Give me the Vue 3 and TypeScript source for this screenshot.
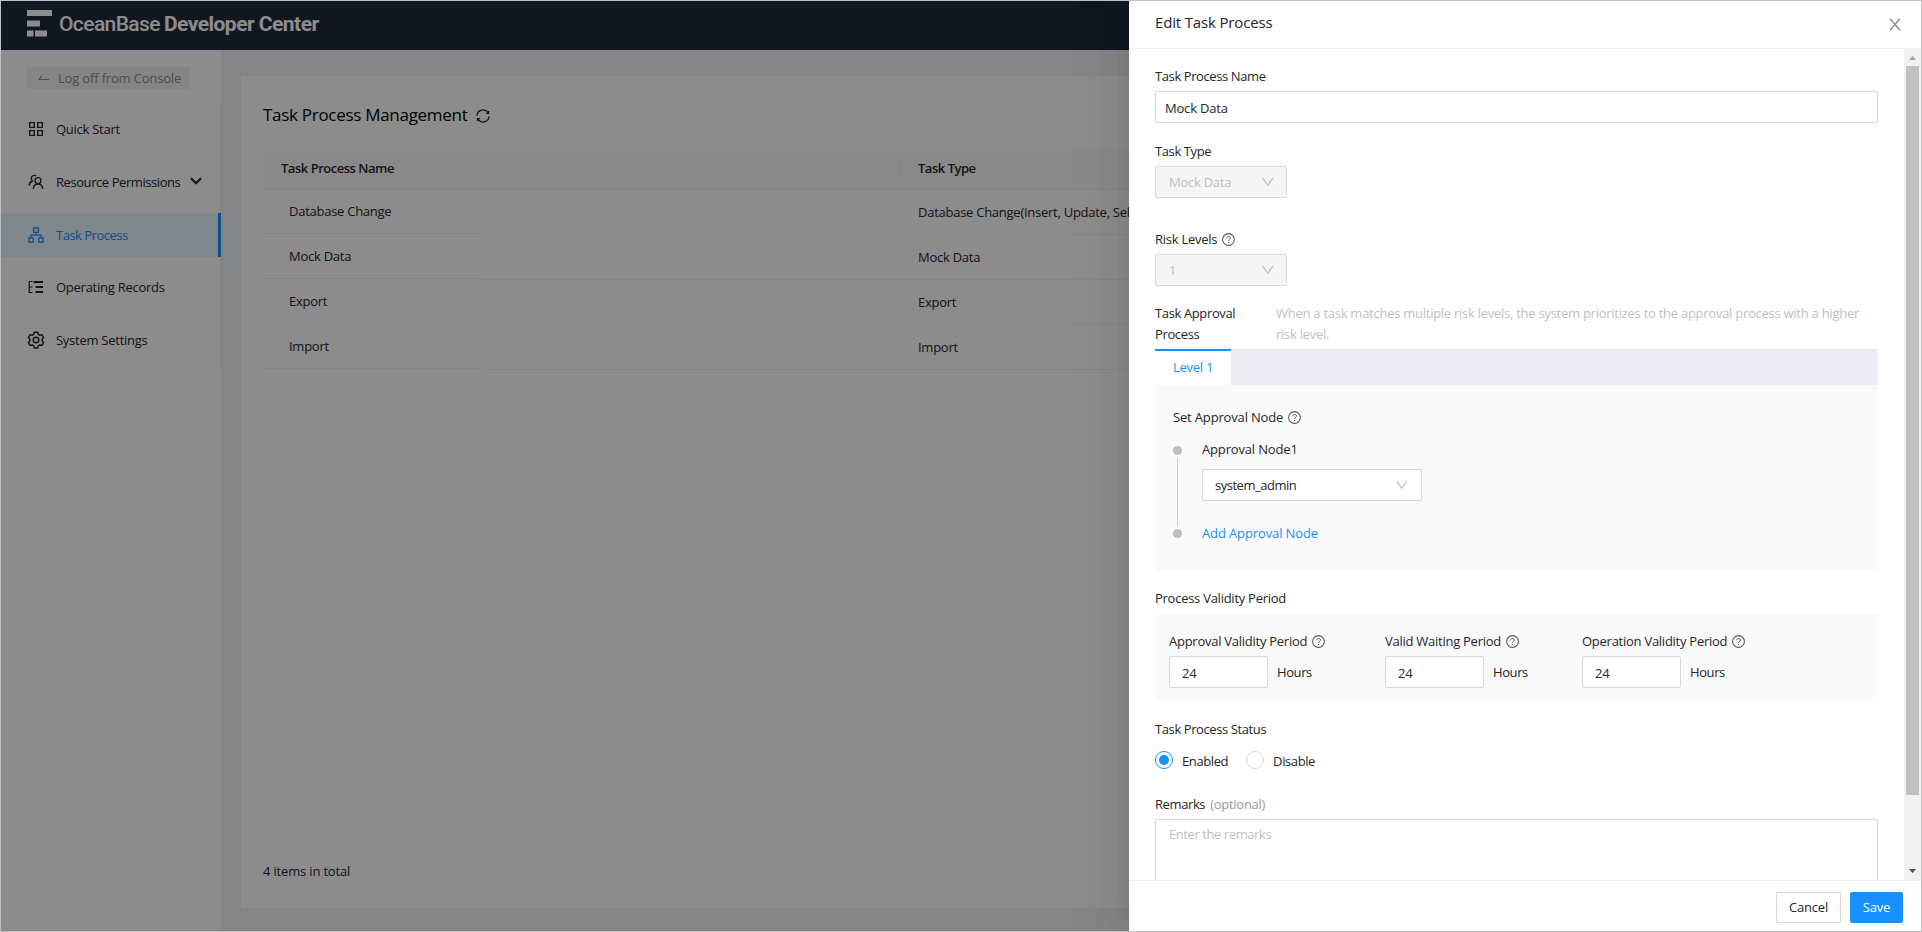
<script setup lang="ts">
import { ref } from 'vue'

interface MenuItem { key: string; label: string; arrow?: boolean }
interface ProcessRow { name: string; type: string }
interface Period { key: string; label: string; hours: string }

const menu: MenuItem[] = [
  { key: 'start', label: 'Quick Start' },
  { key: 'perm', label: 'Resource Permissions', arrow: true },
  { key: 'process', label: 'Task Process' },
  { key: 'records', label: 'Operating Records' },
  { key: 'settings', label: 'System Settings' },
]
const activeKey = ref('process')

const rows: ProcessRow[] = [
  { name: 'Database Change', type: 'Database Change(Insert, Update, Select, Delete)' },
  { name: 'Mock Data', type: 'Mock Data' },
  { name: 'Export', type: 'Export' },
  { name: 'Import', type: 'Import' },
]

const processName = ref('Mock Data')
const status = ref<'enabled' | 'disabled'>('enabled')
const remarks = ref('')
const periods = ref<Period[]>([
  { key: 'approval', label: 'Approval Validity Period', hours: '24' },
  { key: 'waiting', label: 'Valid Waiting Period', hours: '24' },
  { key: 'operation', label: 'Operation Validity Period', hours: '24' },
])
</script>

<template>
  <div class="screen">
    <div class="app">
      <header class="topbar">
        <svg class="logo" width="26" height="28" viewBox="0 0 26 28" fill="#fff">
          <path d="M0 0h25v6H0zM0 10.5h13v6H0zM0 20.5h6.5v6H0zM8 20.5h12v6H8z" />
        </svg>
        <span class="brand">OceanBase</span>
        <span class="brand strong">Developer Center</span>
      </header>
      <div class="workspace">
        <nav class="sidebar">
          <div class="logoff">
            <svg width="11" height="6" viewBox="0 0 11 6" fill="none" stroke="currentColor"><path d="M4 .5 1 4.5h10" /></svg>
            <span>Log off from Console</span>
          </div>
          <div class="menu">
            <div v-for="m in menu" :key="m.key" class="item" :class="[m.key, { active: m.key === activeKey }]">
              <svg v-if="m.key === 'start'" class="ico" viewBox="0 0 16 16" fill="none" stroke="currentColor" stroke-width="1.3">
                <path d="M1.650 1.650h4.700v4.700h-4.700zM9.650 1.650h4.700v4.700h-4.700zM1.650 9.650h4.700v4.700h-4.700zM9.650 9.650h4.700v4.700h-4.700z" />
              </svg>
              <svg v-else-if="m.key === 'perm'" class="ico" viewBox="0 0 16 16" fill="none" stroke="currentColor" stroke-width="1.4">
                <circle cx="10" cy="6.6" r="3" />
                <path d="M5.2 15c.3-3 2.2-5 4.8-5s4.500 2 4.800 5M8 1.900C6.500.8 3.500 1.500 3.300 4.300c0 1.200.4 2 1.100 2.700C2.600 7.700 1.300 9.300 1.100 11.600" />
              </svg>
              <svg v-else-if="m.key === 'process'" class="ico" viewBox="0 0 16 16" fill="none" stroke="currentColor" stroke-width="1.3">
                <path d="M5.650.95h4.700v4.400h-4.700zM.95 10.850h4.200v4.200H.95zM10.850 10.850h4.200v4.200h-4.200zM8 5.350v2.800M3 10.850v-2.700h10v2.700" />
              </svg>
              <svg v-else-if="m.key === 'records'" class="ico" viewBox="0 0 16 16" fill="none" stroke="currentColor" stroke-width="1.4">
                <path d="M4.500 2.500H1.200v11h3.300M1.200 8h3.300" stroke-width="1.2" />
                <path d="M5.500 3H15M7.500 8H15M7.500 13H15" stroke-width="2" />
              </svg>
              <svg v-else class="ico gear" viewBox="0 0 18 18" fill="none" stroke="currentColor" stroke-width="1.5" stroke-linejoin="round">
                <path d="M7.300 1.200h3.400l.6 2.100 1.500.9 2.100-.5 1.700 2.900-1.500 1.600v1.700l1.500 1.600-1.700 2.900-2.100-.5-1.500.9-.6 2.100H7.300l-.6-2.100-1.500-.9-2.100.5-1.700-2.900 1.500-1.600V8.200L1.400 6.600l1.700-2.900 2.100.5 1.500-.9z" />
                <circle cx="9" cy="9" r="2.800" />
              </svg>
              <span class="item-label">{{ m.label }}</span>
              <svg v-if="m.arrow" class="caret" width="12" height="8" viewBox="0 0 12 8" fill="none" stroke="currentColor" stroke-width="2.200"><path d="m1 1.300 5 5 5-5" /></svg>
            </div>
          </div>
        </nav>
        <main class="card">
          <div class="card-title">
            <h1>Task Process Management</h1>
            <svg width="14" height="14" viewBox="0 0 14 14" fill="none" stroke="#222" stroke-width="1.200">
              <path d="M1 6.600A6 6 0 0 1 12 3.700M13 7.400A6 6 0 0 1 2 10.300M12.500 1.900v2.400h-2.300M1.500 12.100V9.700h2.300" />
            </svg>
          </div>
          <div class="table">
            <div class="thead">
              <div class="th name">Task Process Name</div>
              <div class="th">Task Type</div>
            </div>
            <div v-for="r in rows" :key="r.name" class="tr">
              <div class="td name">{{ r.name }}</div>
              <div class="td type">{{ r.type }}</div>
            </div>
          </div>
          <div class="total">4 items in total</div>
        </main>
      </div>
    </div>

    <div class="mask"></div>

    <section class="drawer">
      <header class="drawer-head">
        <h2>Edit Task Process</h2>
        <svg width="12" height="13" viewBox="0 0 12 13" fill="none" stroke="#8c8c8c" stroke-width="1.400"><path d="m1 .7 10 11.600M11 .7 1 12.300" /></svg>
      </header>

      <div class="drawer-body">
        <div class="form">
          <label class="label tight">Task Process Name</label>
          <input v-model="processName" class="input full" type="text" />

          <label class="label type-label tight">Task Type</label>
          <div class="select disabled type-select">
            <span>Mock Data</span>
            <svg class="down" viewBox="0 0 12 10"><path d="m.8 1 5 7.300 5-7.300" /></svg>
          </div>

          <label class="label risk-label">Risk Levels
            <svg class="help" viewBox="0 0 13 13"><circle cx="6.500" cy="6.500" r="5.900" /><path d="M4.700 5.200c0-2.400 3.700-2.300 3.700-.1 0 1.300-1.900 1.300-1.900 2.700M6.500 8.900v1.100" /></svg>
          </label>
          <div class="select disabled risk">
            <span>1</span>
            <svg class="down" viewBox="0 0 12 10"><path d="m.8 1 5 7.300 5-7.300" /></svg>
          </div>

          <div class="approval-head">
            <div class="approval-title">Task Approval Process</div>
            <div class="approval-hint">When a task matches multiple risk levels, the system prioritizes to the approval process with a higher risk level.</div>
          </div>
          <div class="tabs"><div class="tab">Level 1</div></div>
          <div class="nodes">
            <div class="label loose">Set Approval Node
              <svg class="help" viewBox="0 0 13 13"><circle cx="6.500" cy="6.500" r="5.900" /><path d="M4.700 5.200c0-2.400 3.700-2.300 3.700-.1 0 1.300-1.900 1.300-1.900 2.700M6.500 8.900v1.100" /></svg>
            </div>
            <div class="timeline">
              <div class="rail"><i class="dot"></i><i class="line"></i><i class="dot"></i></div>
              <div class="steps">
                <div class="label loose">Approval Node1</div>
                <div class="select node-select">
                  <span>system_admin</span>
                  <svg class="down" viewBox="0 0 12 10"><path d="m.8 1 5 7.300 5-7.300" /></svg>
                </div>
                <a class="add">Add Approval Node</a>
              </div>
            </div>
          </div>

          <div class="label period-label">Process Validity Period</div>
          <div class="periods">
            <div v-for="p in periods" :key="p.key" class="period" :class="p.key">
              <div class="label">{{ p.label }}
                <svg class="help" viewBox="0 0 13 13"><circle cx="6.500" cy="6.500" r="5.900" /><path d="M4.700 5.200c0-2.400 3.700-2.300 3.700-.1 0 1.300-1.900 1.300-1.900 2.700M6.500 8.900v1.100" /></svg>
              </div>
              <div class="hours"><input v-model="p.hours" class="input" type="text" /><span>Hours</span></div>
            </div>
          </div>

          <div class="label status-label tight">Task Process Status</div>
          <div class="radios">
            <div class="radio" @click="status = 'enabled'"><i :class="{ on: status === 'enabled' }"></i><span>Enabled</span></div>
            <div class="radio" @click="status = 'disabled'"><i :class="{ on: status === 'disabled' }"></i><span>Disable</span></div>
          </div>

          <div class="label remarks-label"><span class="tight">Remarks</span><span class="optional">(optional)</span></div>
          <textarea v-model="remarks" class="remarks" placeholder="Enter the remarks"></textarea>
        </div>
        <div class="scrollbar">
          <svg width="17" height="17" viewBox="0 0 17 17" fill="#a3a3a3"><path d="m5 11 3.500-4 3.500 4z" /></svg>
          <div class="thumb"></div>
          <svg class="end" width="17" height="17" viewBox="0 0 17 17" fill="#505050"><path d="m5 6 3.500 4L12 6z" /></svg>
        </div>
      </div>

      <footer class="drawer-foot">
        <button class="btn">Cancel</button>
        <button class="btn primary">Save</button>
      </footer>
    </section>
  </div>
</template>

<style>
html, body { margin: 0; overflow: hidden; }
</style>

<style scoped>
* { box-sizing: border-box; }
.screen { position: relative; width: 1922px; height: 932px; border: 1px solid #c0c0c0; overflow: hidden; background: #fff; font: 13px/22px "Open Sans", "Noto Sans", sans-serif; letter-spacing: -.26px; color: #262626; }
.tight { letter-spacing: -.4px; }
.loose { letter-spacing: -.16px; }
.app { height: 930px; display: flex; flex-direction: column; }
.topbar { height: 49px; flex: none; display: flex; align-items: flex-start; padding: 9px 0 0 26px; background: #1f2b3b; color: #fff; }
.logo { margin-right: 6px; }
.brand { font: 500 21px/28px Roboto, sans-serif; letter-spacing: -.6px; margin-right: 4px; }
.brand.strong { font-weight: 700; letter-spacing: -.53px; }
.workspace { flex: 1; display: flex; background: #f0f2f5; }
.sidebar { width: 220px; background: #fff; padding-top: 17px; }
.logoff { margin-left: 26px; width: 163px; height: 22px; display: flex; align-items: center; padding-left: 11px; gap: 9px; background: #f3f3f3; color: #8c8c8c; letter-spacing: -.17px; }
.menu { margin-top: 14px; padding-top: 4px; height: 265px; border-right: 1px solid #f0f0f0; }
.item { height: 44px; margin-bottom: 9px; display: flex; align-items: center; padding-left: 27px; width: 220px; }
.item.perm { letter-spacing: -.43px; }
.item.process { letter-spacing: -.5px; }
.item.active { background: #e6f7ff; color: #1890ff; border-right: 3px solid #1890ff; margin-bottom: 8px; }
.ico { width: 16px; height: 16px; flex: none; margin-right: 12px; }
.gear { width: 18px; height: 18px; margin: 0 11px 0 -1px; }
.caret { margin: -3px 0 0 10px; }
.card { flex: 1; margin: 26px 20px 23px; background: #fff; padding: 0 0 0 22px; display: flex; flex-direction: column; }
.card-title { height: 72px; display: flex; align-items: center; gap: 9px; padding-top: 5px; }
.card-title h1 { margin: 0; font-size: 17px; line-height: 28px; font-weight: 400; letter-spacing: -.29px; color: #000; }
.card-title svg { margin-top: 3px; }
.table { width: 1600px; }
.thead { display: flex; height: 42px; align-items: center; padding-bottom: 1px; background: #fafafa; border-bottom: 1px solid #f0f0f0; font-weight: 600; letter-spacing: -.48px; }
.thead .name { width: 637px; height: 22px; padding-left: 18px; border-right: 1px solid #f0f0f0; margin-right: 18px; }
.tr { display: flex; align-items: flex-start; height: 45px; }
.td { border-bottom: 1px solid #f0f0f0; }
.td.name { width: 219px; height: 44px; padding: 10px 0 0 26px; white-space: nowrap; }
.td.type { flex: 1; height: 45px; padding: 11px 0 0 436px; }
.total { margin-top: auto; margin-bottom: 26px; letter-spacing: -.17px; }
.mask { position: absolute; inset: 0; background: rgba(0, 0, 0, .45); }

.drawer { position: absolute; top: 0; right: 0; bottom: 0; width: 792px; background: #fff; display: flex; flex-direction: column; box-shadow: -6px 0 16px -8px rgba(0,0,0,.08), -9px 0 28px rgba(0,0,0,.05), -12px 0 48px 16px rgba(0,0,0,.03); }
.drawer-head { height: 48px; flex: none; display: flex; justify-content: space-between; align-items: center; padding: 0 20px 1px 26px; border-bottom: 1px solid #f0f0f0; }
.drawer-head h2 { margin: 0 0 4px; font-size: 15px; line-height: 24px; font-weight: 500; letter-spacing: -.16px; }
.drawer-body { flex: 1; min-height: 0; display: flex; }
.form { flex: 1; min-width: 0; padding: 16px 26px 0; overflow: hidden; }
.label { display: flex; align-items: center; height: 22px; white-space: nowrap; }
.help { width: 13px; height: 13px; margin-left: 5px; fill: none; stroke: #595959; stroke-width: 1.100; }
.help path { stroke-width: 1; }
.input { display: block; height: 32px; border: 1px solid #d9d9d9; border-radius: 2px; background: #fff; font: inherit; letter-spacing: -.2px; color: inherit; padding: 2px 9px 0; outline: none; }
.full { width: 723px; margin-top: 4px; }
.type-label { margin-top: 17px; }
.select { display: flex; align-items: center; justify-content: space-between; width: 132px; height: 32px; padding: 0 12px 0 13px; background: #fff; border: 1px solid #d9d9d9; border-radius: 2px; }
.select.disabled { background: #f5f5f5; color: #bfbfbf; }
.down { width: 12px; height: 10px; margin-top: -1px; fill: none; stroke: #bfbfbf; stroke-width: 1.300; }
.type-select { margin-top: 4px; }
.risk-label { margin-top: 30px; }
.risk { margin-top: 4px; }
.approval-head { display: flex; line-height: 21px; height: 42px; margin: 17px 0 4px; }
.approval-title { width: 121px; padding-right: 30px; flex: none; letter-spacing: -.37px; }
.approval-hint { color: #bfbfbf; }
.tabs { height: 36px; background: #eaedf2; display: flex; }
.tab { width: 76px; background: #fff; border-top: 2px solid #1890ff; color: #1890ff; text-align: center; line-height: 33px; font-weight: 500; }
.nodes { height: 186px; background: #fafafa; padding: 21px 18px 0; }
.timeline { display: flex; margin-top: 10px; }
.rail { width: 29px; padding-top: 8px; display: flex; flex-direction: column; }
.dot { width: 9px; height: 9px; border-radius: 50%; background: #bfbfbf; }
.line { width: 1px; height: 70px; margin: 2px 0 2px 4px; background: #d0d0d0; }
.node-select { width: 220px; margin-top: 9px; padding-left: 12px; padding-right: 13px; letter-spacing: -.48px; }
.add { display: block; margin-top: 21px; color: #1890ff; letter-spacing: -.12px; }
.period-label { margin-top: 16px; }
.periods { margin-top: 5px; height: 87px; background: #fafafa; border-radius: 2px; padding: 16px 14px 0; display: flex; }
.approval { width: 216px; }
.waiting { width: 197px; }
.hours { display: flex; align-items: center; gap: 9px; margin-top: 4px; letter-spacing: -.4px; }
.hours .input { width: 99px; padding-left: 12px; }
.status-label { margin-top: 17px; }
.radios { display: flex; gap: 18px; margin-top: 8px; }
.radio { display: flex; align-items: center; height: 24px; letter-spacing: -.4px; }
.radio span { padding-top: 1px; }
.radio i { width: 18px; height: 18px; border: 1px solid #d9d9d9; border-radius: 50%; margin-right: 9px; display: grid; place-items: center; }
.radio i.on { border-color: #1890ff; }
.radio i.on::after { content: ""; width: 10px; height: 10px; border-radius: 50%; background: #1890ff; }
.remarks-label { margin-top: 21px; }
.optional { color: #999; margin-left: 5px; }
.remarks { display: block; margin-top: 4px; width: 723px; height: 96px; resize: none; border: 1px solid #d9d9d9; border-radius: 2px; font: inherit; letter-spacing: -.42px; padding: 3px 13px; }
.remarks::placeholder { color: #bfbfbf; }
.scrollbar { width: 17px; flex: none; background: #f1f1f1; display: flex; flex-direction: column; }
.scrollbar svg { flex: none; }
.thumb { height: 729px; width: 13px; margin-left: 2px; background: #c1c1c1; }
.end { margin-top: auto; }
.drawer-foot { height: 51px; flex: none; border-top: 1px solid #f0f0f0; display: flex; justify-content: flex-end; gap: 9px; padding: 11px 18px 0; }
.btn { height: 31px; width: 65px; padding: 0 0 2px; border: 1px solid #d9d9d9; border-radius: 2px; background: #fff; color: inherit; font: inherit; letter-spacing: -.2px; }
.primary { width: 53px; background: #1890ff; border-color: #1890ff; color: #fff; }
</style>
